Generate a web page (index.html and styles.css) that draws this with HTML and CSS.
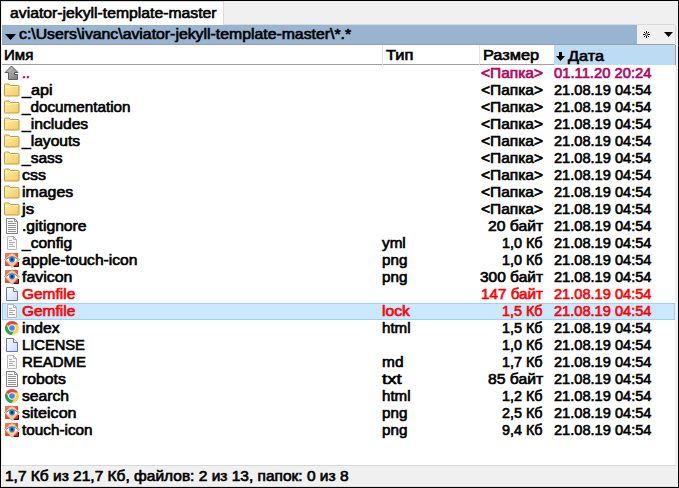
FILE: index.html
```html
<!DOCTYPE html>
<html lang="ru">
<head>
<meta charset="utf-8">
<title>aviator-jekyll-template-master</title>
<link rel="stylesheet" href="styles.css">
</head>
<body>
<svg class="defs" aria-hidden="true">
  <defs>
    <linearGradient id="gold" x1="0" y1="0" x2="1" y2="1"><stop offset="0" stop-color="#fff0ac"/><stop offset="1" stop-color="#f2cb60"/></linearGradient>
    <linearGradient id="steel" x1="0" y1="0" x2="1" y2="1"><stop offset="0" stop-color="#c8c8c8"/><stop offset="1" stop-color="#7c7c7c"/></linearGradient>
    <linearGradient id="paper" x1="0" y1="0" x2="1" y2="1"><stop offset="0" stop-color="#fff"/><stop offset="1" stop-color="#ccd9ff"/></linearGradient>
    <linearGradient id="fire" x1="0" y1="0" x2="1" y2="1"><stop offset="0" stop-color="#f98450"/><stop offset="1" stop-color="#ee1608"/></linearGradient>
  </defs>
  <symbol id="up" viewBox="0 0 16 16"><path d="M7.500 1 1 7.500h3.500v7h9v-5h-3v-2H14z" fill="url(#steel)" stroke="#5c5c5c"/></symbol>
  <symbol id="folder" viewBox="0 0 16 16"><path d="M.5 13.500V3q0-1 1-1H5l1.500 1.500h7.500q1 0 1 1v9q0 .5-1 .5h-13q-.5 0-.5-.5z" fill="url(#gold)" stroke="#c9983a"/><path d="M1.500 5.500h5l1-1h6.500" fill="none" stroke="#fff3bf"/></symbol>
  <symbol id="text" viewBox="0 0 16 16"><path d="M2.500.5h8l3 3v12h-11z" fill="#fafafa" stroke="#818181"/><path d="M10.500.5v3h3M4 3.500h5M4 5.500h8M4 7.500h8M4 9.500h8M4 11.500h8M4 13.500h8" fill="none" stroke="#929292"/></symbol>
  <symbol id="note" viewBox="0 0 16 16"><path d="M3.500 1.500h6l3 3v10h-9z" fill="#f8f8f8" stroke="#b8b8b8"/><path d="M9.500 1.500v3h3M5 5.500h3M5 7.500h6M5 9.500h4M5 11.500h6" fill="none" stroke="#b0b0b0"/></symbol>
  <symbol id="blank" viewBox="0 0 16 16"><path d="M2.500 1.500h7l4 4v9h-11z" fill="url(#paper)" stroke="#6276bd"/><path d="M9.500 1.500v4h4" fill="#fff" stroke="#6276bd"/></symbol>
  <symbol id="chrome" viewBox="0 0 16 16"><circle cx="8" cy="8" r="7" fill="#ffd044"/><path d="M8 8 1.940 4.500A7 7 0 0 1 14.060 4.500H8z" fill="#e54b3d"/><path d="M1.940 4.500A7 7 0 0 0 7.500 15L10.800 9.700 5 9.700z" fill="#2ba25c"/><circle cx="8" cy="8" r="3.700" fill="#f5f5f5"/><circle cx="8" cy="8" r="2.800" fill="#4285f4"/></symbol>
  <symbol id="eye" viewBox="0 0 16 16"><path d="M1 1h13v13H1z" fill="url(#fire)"/><path d="M9.500 14.500h5V10" fill="none" stroke="#2a0a08"/><path d="M.3 7.500 4.500 3.500 5.500 2h1.500L8 .5 9 2h1.500l1 1.500 4.200 4-4.200 4.500L8 15.500 4.500 12z" fill="#f3c9a2" stroke="#b88968" stroke-width=".5"/><path d="M2 7.500Q8 2 14 7.500 8 13 2 7.500z" fill="#fff"/><path d="M2 7.500Q8 2 14 7.500" fill="none" stroke="#6b4a40" stroke-width=".7"/><circle cx="8" cy="7.500" r="2.900" fill="#2089f0"/><circle cx="8" cy="7.500" r="1.300" fill="#061542"/></symbol>
</svg>
<main class="panel">
  <nav class="tabs"><div class="tab"><span data-width="207">aviator-jekyll-template-master</span></div></nav>
  <div class="path">
    <div class="path-name"><svg class="caret" viewBox="0 0 11 6"><path d="M0 0h11L5.500 6z"/></svg><span data-width="332">c:\Users\ivanc\aviator-jekyll-template-master\*.*</span></div>
    <div class="tools"><svg class="star" viewBox="0 0 7 7"><path d="M3.500 0v2.500M3.500 4.500V7M0 3.500h2.500M4.500 3.500H7M1 1l1.500 1.500M4.500 4.500 6 6M6 1 4.500 2.500M2.500 4.500 1 6"/></svg><svg class="drop" viewBox="0 0 9 5"><path d="M0 0h9L4.500 5z"/></svg></div>
  </div>
  <header class="columns">
    <div class="col"><span data-width="29">Имя</span></div>
    <div class="col"><span data-width="27">Тип</span></div>
    <div class="col"><span data-width="56">Размер</span></div>
    <div class="col sorted"><svg class="arrow" viewBox="0 0 9 9"><path d="M3 0h3v4h3L4.500 9 0 4h3z"/></svg><span data-width="36">Дата</span></div>
  </header>
  <section class="files" id="files"></section>
  <footer class="status"><span data-width="343">1,7 Кб из 21,7 Кб, файлов: 2 из 13, папок: 0 из 8</span></footer>
</main>
<script src="files.js"></script>
</body>
</html>
```
FILE: styles.css
```css
* { box-sizing: border-box; }
body { margin: 0; background: #fff; color: #000; font: 14px/17px "Liberation Sans", sans-serif; }
.defs { position: absolute; width: 0; height: 0; }
.panel { width: 679px; height: 488px; border: 1px solid #000; padding: 0 2px 0 1px; background: #f0f0f0; display: flex; flex-direction: column; }
span { display: inline-block; white-space: pre; transform-origin: left center; -webkit-text-stroke: .6px currentColor; }
.tabs { height: 24px; display: flex; border-bottom: 1px solid #dadada; margin-right: 1px; }
.tab { width: 222px; height: 24px; padding: 3px 0 0 8px; background: #fff; border-right: 1px solid #d9d9d9; border-top: 1px solid #d9d9d9; }
.path { height: 19px; display: flex; }
.path-name { width: 635px; padding-left: 3px; background: #99b4d1; display: flex; align-items: center; gap: 3px; }
.caret { width: 11px; height: 6px; margin-top: 4px; flex-shrink: 0; }
.tools { flex: 1; display: flex; align-items: center; padding-left: 6px; gap: 14px; border-right: 1px solid #d5d5d5; }
.star { width: 7px; height: 7px; stroke: #000; stroke-width: 1; }
.drop { width: 9px; height: 5px; }
.columns { height: 21px; display: grid; grid-template-columns: 380px 97px 75px 122px; border-top: 1px solid #a0a0a0; border-bottom: 1px solid #a0a0a0; background: #fff; flex-shrink: 0; margin-right: 1px; }
.col { padding: 2px 0 0 2px; border-left: 1px solid #e3e3e3; }
.col:first-child { border-left: 0; }
.col + .col { padding-left: 3px; }
.col.sorted { background: #bcdcf4; border-left: 0; border-right: 1px solid #a0a0a0; display: flex; align-items: center; gap: 3px; padding: 3px 0 0 2px; }
.arrow { width: 9px; height: 9px; }
.files { height: 400px; margin-right: 1px; background: #fff; }
.row { height: 17px; padding-left: 2px; display: grid; grid-template-columns: 18px 360px 80px 81px 1fr; line-height: 17px; }
.row svg { width: 16px; height: 16px; }
.size { text-align: right; }
.size span { transform-origin: right center; }
.date { padding-left: 11px; }
.up { color: #b9005c; }
.marked { color: #f00; }
.current { background: #cce8ff; box-shadow: inset 0 0 0 1px #99d1ff; }
.status { flex: 1; border-top: 1px solid #d7d7d7; border-bottom: 1px solid #dedede; padding: 2px 0 0 3px; }
```
FILE: files.js
```js
const folderSize = ["<Папка>", 62];
const files = [
  ["up", "..", 8, "", 0, ...folderSize, "up"],
  ["folder", "_api", 30, "", 0, ...folderSize],
  ["folder", "_documentation", 109, "", 0, ...folderSize],
  ["folder", "_includes", 66, "", 0, ...folderSize],
  ["folder", "_layouts", 58, "", 0, ...folderSize],
  ["folder", "_sass", 41, "", 0, ...folderSize],
  ["folder", "css", 24, "", 0, ...folderSize],
  ["folder", "images", 51, "", 0, ...folderSize],
  ["folder", "js", 12, "", 0, ...folderSize],
  ["text", ".gitignore", 65, "", 0, "20 байт", 55],
  ["note", "_config", 50, "yml", 24, "1,0 Кб", 41],
  ["eye", "apple-touch-icon", 116, "png", 25, "1,0 Кб", 41],
  ["eye", "favicon", 50, "png", 25, "300 байт", 63],
  ["blank", "Gemfile", 53, "", 0, "147 байт", 62, "marked"],
  ["note", "Gemfile", 53, "lock", 28, "1,5 Кб", 41, "marked current"],
  ["chrome", "index", 37, "html", 28, "1,5 Кб", 41],
  ["blank", "LICENSE", 63, "", 0, "1,0 Кб", 41],
  ["note", "README", 64, "md", 21, "1,7 Кб", 41],
  ["text", "robots", 44, "txt", 20, "85 байт", 55],
  ["chrome", "search", 47, "html", 28, "1,2 Кб", 41],
  ["eye", "siteicon", 54, "png", 25, "2,5 Кб", 41],
  ["eye", "touch-icon", 71, "png", 25, "9,4 Кб", 41]
];
const list = document.getElementById("files");

function cell(kind, text, width) {
  const box = document.createElement("div");
  box.className = kind;
  const label = document.createElement("span");
  label.textContent = text;
  label.dataset.width = width;
  box.append(label);
  return box;
}

for (const [icon, name, nameWidth, type, typeWidth, size, sizeWidth, state] of files) {
  const row = document.createElement("div");
  row.className = "row " + (state || "");
  row.innerHTML = `<svg><use href="#${icon}"/></svg>`;
  row.append(
    cell("name", name, nameWidth),
    cell("type", type, typeWidth),
    cell("size", size, sizeWidth),
    cell("date", state === "up" ? "01.11.20 20:24" : "21.08.19 04:54", 97)
  );
  list.append(row);
}

for (const label of document.querySelectorAll("[data-width]")) {
  if (label.textContent.length) {
    label.style.transform = `scaleX(${label.dataset.width / label.offsetWidth})`;
  }
}
```
